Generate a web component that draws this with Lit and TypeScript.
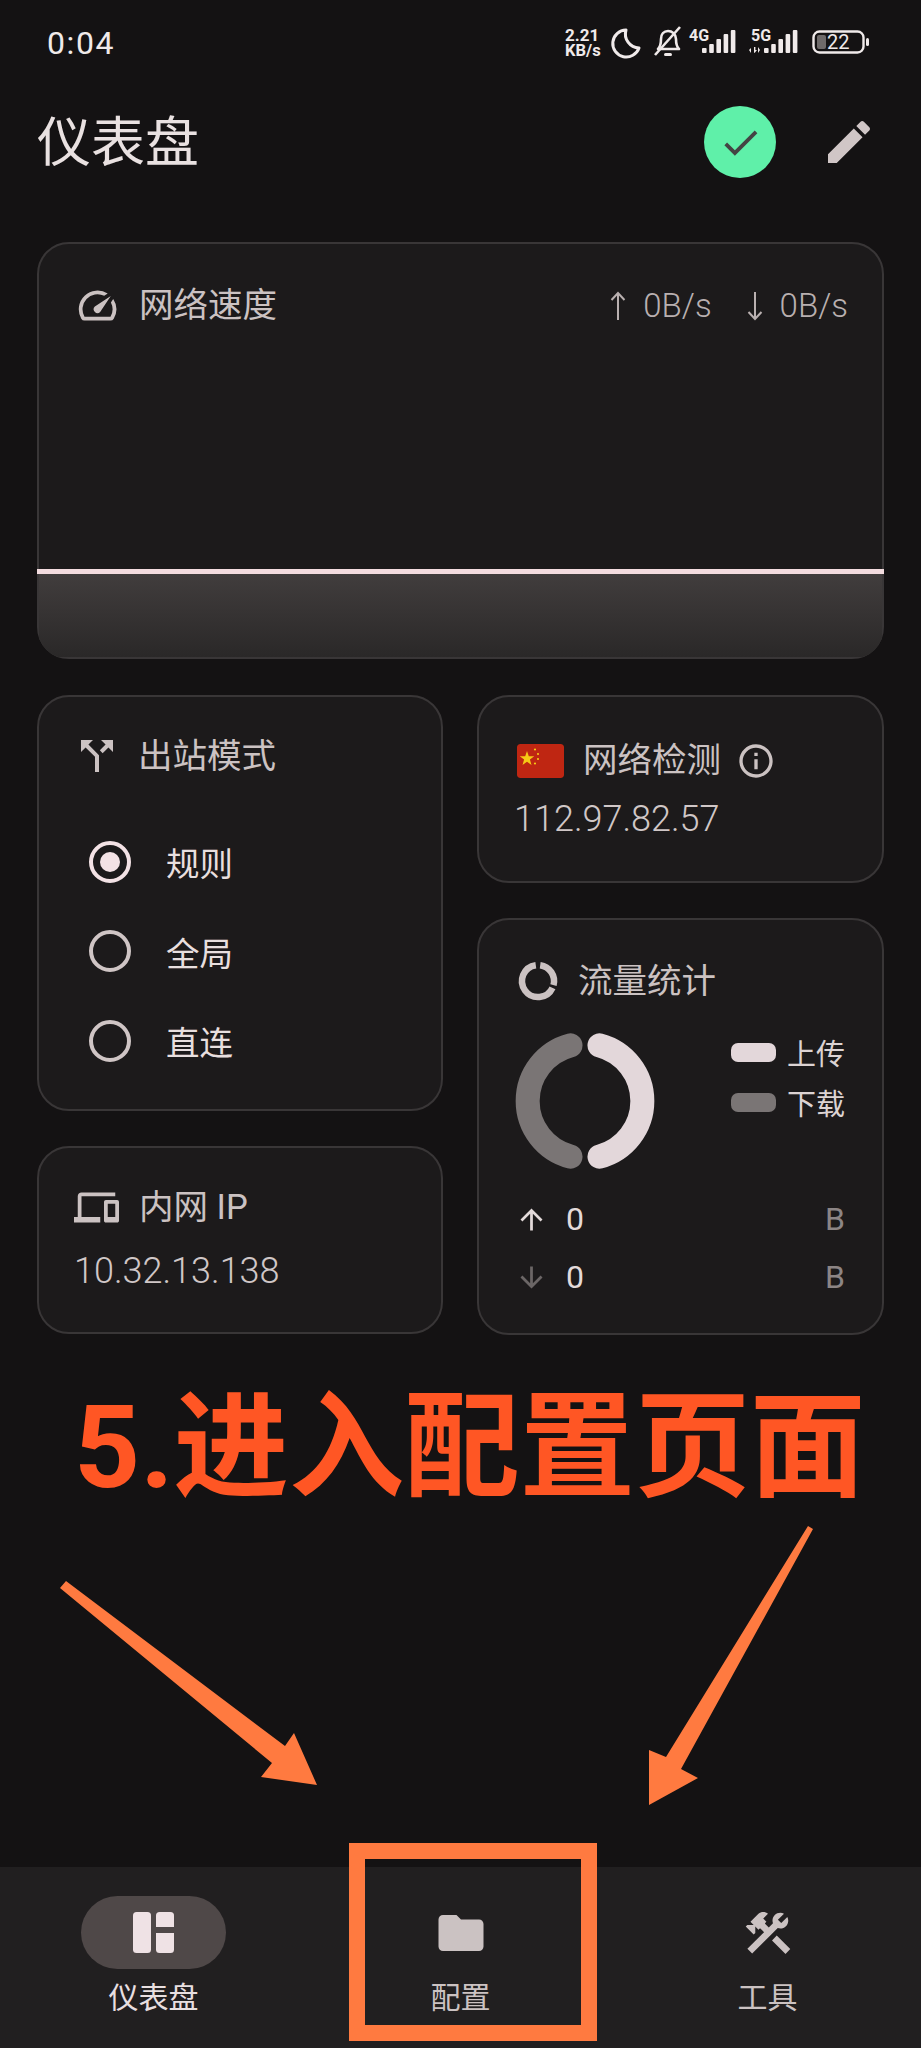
import { LitElement, html, css, svg } from "lit";
import { customElement } from "lit/decorators.js";

const P = {
  speed: "M20.38 8.57l-1.23 1.85a8 8 0 0 1-.22 7.58H5.07A8 8 0 0 1 15.58 6.85l1.85-1.23A10 10 0 0 0 3.35 19a2 2 0 0 0 1.72 1h13.85a2 2 0 0 0 1.74-1 10 10 0 0 0-.27-10.44zm-9.79 6.84a2 2 0 0 0 2.83 0l5.66-8.49-8.49 5.66a2 2 0 0 0 0 2.83z",
  split: "M14 4l2.29 2.29-2.88 2.88 1.42 1.42 2.88-2.88L20 10V4zm-4 0H4v6l2.29-2.29 4.71 4.7V20h2v-8.41l-5.29-5.3z",
  devices: "M4 6h18V4H4c-1.1 0-2 .9-2 2v11H0v3h14v-3H4V6zm19 2h-6c-.55 0-1 .45-1 1v10c0 .55.45 1 1 1h6c.55 0 1-.45 1-1V9c0-.55-.45-1-1-1zm-1 9h-4v-7h4v7z",
  info: "M11 7h2v2h-2zm0 4h2v6h-2zm1-9C6.48 2 2 6.48 2 12s4.48 10 10 10 10-4.48 10-10S17.52 2 12 2zm0 18c-4.41 0-8-3.59-8-8s3.59-8 8-8 8 3.59 8 8-3.59 8-8 8z",
  edit: "M3 17.25V21h3.75L17.81 9.94l-3.75-3.75L3 17.25zM20.71 7.04c.39-.39.39-1.02 0-1.41l-2.34-2.34c-.39-.39-1.02-.39-1.41 0l-1.83 1.83 3.75 3.75 1.83-1.83z",
  check: "M9 16.17L4.83 12l-1.42 1.41L9 19 21 7l-1.41-1.41z",
  up: "M4 12l1.41 1.41L11 7.83V20h2V7.83l5.58 5.59L20 12l-8-8-8 8z",
  down: "M20 12l-1.41-1.41L13 16.17V4h-2v12.17l-5.58-5.59L4 12l8 8 8-8z",
  folder: "M10 4H4c-1.1 0-2 .9-2 2v12c0 1.1.9 2 2 2h16c1.1 0 2-.9 2-2V8c0-1.1-.9-2-2-2h-8l-2-2z",
  tools: "M13.78 15.3l6 6 2.11-2.16-6-6zM17.5 10c1.93 0 3.5-1.57 3.5-3.5 0-.58-.16-1.12-.41-1.6l-2.7 2.7-1.49-1.49 2.7-2.7C18.62 3.16 18.08 3 17.5 3 15.57 3 14 4.57 14 6.5c0 .41.08.8.21 1.16l-1.85 1.85-1.78-1.78.71-.71-1.41-1.41L12 3.49c-1.17-1.17-3.07-1.17-4.24 0L4.22 7.03l1.41 1.41H2.81l-.71.71 3.54 3.54.71-.71V9.15l1.41 1.41.71-.71 1.78 1.78-7.41 7.41 2.12 2.12L16.34 9.79c.36.13.75.21 1.16.21z",
};

const icon = (d: string, size: number) =>
  html`<svg class="ic" width=${size} height=${size} viewBox="0 0 24 24" fill="currentColor"><path d=${d}></path></svg>`;

const bars = (x0: number, hs: number[]) =>
  hs.map((h, i) => svg`<rect x=${x0 + i * 7.2} y=${53 - h} width="4.6" height=${h} rx="1"></rect>`);

@customElement("app-root")
export class AppRoot extends LitElement {
  static styles = css`
    :host {
      display: flex;
      flex-direction: column;
      position: relative;
      width: 921px;
      height: 2048px;
      overflow: hidden;
      background: #141213;
      color: #cbc2c2;
      font-family: Roboto, "Noto Sans CJK SC", sans-serif;
    }
    .ic { display: block; flex: none; }
    .status {
      height: 86px;
      display: flex;
      align-items: center;
      justify-content: space-between;
      padding-left: 47px;
      color: #f0eaea;
      flex: none;
    }
    .clock { font-size: 32px; font-weight: 400; letter-spacing: 1.6px; }
    .sicons { display: block; flex: none; }
    .sicons text { font-family: Roboto, sans-serif; fill: #f0eaea; }
    .header {
      height: 112px;
      flex: none;
      display: flex;
      align-items: center;
      justify-content: space-between;
      padding: 0 44px 0 37px;
    }
    .title { font-size: 54px; line-height: 70px; color: #e9e1e1; font-weight: 400; padding-top: 4px; }
    .actions { display: flex; align-items: center; gap: 45px; color: #d0c6c6; }
    .ok {
      width: 72px;
      height: 72px;
      border-radius: 50%;
      background: #5ff0a9;
      color: #444444;
      display: flex;
      align-items: center;
      justify-content: center;
    }
    main {
      flex: 1;
      padding: 44px 37px 0;
      display: flex;
      flex-direction: column;
    }
    .card {
      box-sizing: border-box;
      background: #1c1a1b;
      border: 2px solid #393637;
      border-radius: 32px;
    }
    .speed {
      height: 417px;
      display: flex;
      flex-direction: column;
      overflow: clip;
      overflow-clip-margin: border-box;
    }
    .speed-head {
      display: flex;
      align-items: center;
      padding: 39px 34px 0 36px;
      gap: 19px;
    }
    .label { font-size: 34.5px; line-height: 45px; white-space: nowrap; }
    .rates {
      margin-left: auto;
      display: flex;
      align-items: center;
      font-size: 33px;
      font-weight: 300;
      color: #b9b0b0;
    }
    .rate { display: flex; align-items: center; gap: 17px; }
    .rate + .rate { margin-left: 35px; }
    .thin-arrow { display: block; }
    .graph { margin-top: auto; }
    .line { height: 5px; margin: 0 -2px; background: #f3dcdf; }
    .fill { height: 83px; background: linear-gradient(#413d3d, #2a2828); }
    .cols {
      margin-top: 36px;
      display: grid;
      grid-template-columns: 406px 407px;
      gap: 34px;
    }
    .col { display: flex; flex-direction: column; gap: 35px; }
    .out { height: 416px; padding: 35px 0 0 34px; }
    .small { height: 188px; }
    .row { display: flex; align-items: center; }
    .out .row { gap: 17px; }
    .radios { margin-top: 37px; padding-left: 16px; }
    .radio { height: 89.5px; display: flex; align-items: center; gap: 35px; font-size: 33.5px; color: #e8dfdf; }
    .dot {
      box-sizing: border-box;
      width: 42px;
      height: 42px;
      border: 4px solid #cfc5c5;
      border-radius: 50%;
      display: flex;
      align-items: center;
      justify-content: center;
    }
    .dot.on { border-color: #f3e2e5; }
    .dot.on::after {
      content: "";
      width: 20px;
      height: 20px;
      border-radius: 50%;
      background: #f3e2e5;
    }
    .ip { padding: 37px 0 0 35px; }
    .ip .row { gap: 20px; }
    .value {
      font-size: 36px;
      line-height: 44px;
      font-weight: 300;
      color: #d0c7c7;
      margin-top: 19px;
    }
    .net { padding: 41px 0 0 38px; }
    .net .row { gap: 19px; }
    .net .value { margin-top: 14px; margin-left: -3px; }
    .flag { width: 47px; height: 34px; border-radius: 3px; display: block; flex: none; }
    .net .info { margin-left: -4px; }
    .traffic { height: 417px; padding: 38px 37px 0 36px; }
    .traffic .row { gap: 17px; }
    .chart { display: flex; justify-content: space-between; align-items: flex-start; margin-top: 27px; }
    .legend { margin-top: -4px; }
    .lg { height: 50px; display: flex; align-items: center; gap: 11px; font-size: 29px; color: #dcd3d3; }
    .pill { width: 45px; height: 19px; border-radius: 7px; }
    .stats { margin-top: 19px; }
    .stat { height: 58px; display: flex; align-items: center; gap: 18px; font-size: 32px; color: #e3dada; }
    .stat .unit { margin-left: auto; color: #8c8585; }
    .stat .ic { color: #e3dada; }
    .stat.dim .ic { color: #6b6666; }
    .headline {
      margin-top: 51px;
      padding-left: 37px;
      font-size: 115.3px;
      line-height: 124px;
      font-weight: 700;
      color: #ff5624;
      white-space: nowrap;
      font-family: Roboto, "Noto Sans CJK SC", sans-serif;
    }
    nav {
      height: 181px;
      flex: none;
      background: #211f20;
      display: grid;
      grid-template-columns: repeat(3, 1fr);
    }
    .tab {
      padding-top: 29px;
      display: flex;
      flex-direction: column;
      align-items: center;
      color: #cbc2c2;
    }
    .slot {
      width: 145px;
      height: 73px;
      border-radius: 37px;
      display: flex;
      align-items: center;
      justify-content: center;
    }
    .tab.active .slot { background: #4f4848; color: #efe2e5; }
    .tab-label { margin-top: 9px; font-size: 30px; line-height: 40px; }
    .tab.active .tab-label { color: #e8dfe0; }
    .marks { position: absolute; left: 0; top: 0; pointer-events: none; }
    .box {
      position: absolute;
      left: 349px;
      top: 1843px;
      width: 248px;
      height: 198px;
      box-sizing: border-box;
      border: 16px solid #ff7a40;
      pointer-events: none;
    }
  `;

  render() {
    return html`
      <div class="status">
        <span class="clock">0:04</span>
        <svg class="sicons" width="356" height="86" viewBox="565 0 356 86" fill="#f0eaea">
          <text x="565" y="41" font-size="17" font-weight="700">2.21</text>
          <text x="565" y="56" font-size="16.5" font-weight="700">KB/s</text>
          <path d="M626 30a13.5 13.5 0 1 0 13 18 14 14 0 0 1-13-18z" fill="none" stroke="#f0eaea" stroke-width="3" stroke-linejoin="round"></path>
          <path d="M658 49c3-3 3-6 3-10 0-5 3-8 7-8s8 3 8 8c0 4 0 7 3 10z" fill="none" stroke="#f0eaea" stroke-width="2.6" stroke-linejoin="round"></path>
          <path d="M655 55L680 27" fill="none" stroke="#f0eaea" stroke-width="2.6"></path>
          <rect x="664" y="53" width="8" height="3" rx="1.5"></rect>
          <text x="689" y="41" font-size="16" font-weight="700">4G</text>
          ${bars(702, [5, 9, 14, 19, 23])}
          <text x="751" y="41" font-size="16" font-weight="700">5G</text>
          ${bars(764, [5, 9, 14, 19, 23])}
          <path d="M751 53v-5l-2 2zM754 53v-6h1.4v3l1.6 0-2 2.6zM758 47v6l2-3z"></path>
          <rect x="813.5" y="31.5" width="50" height="21" rx="6" fill="none" stroke="#f0eaea" stroke-width="2.4"></rect>
          <rect x="817" y="35" width="9" height="14" rx="2" fill="#6e6a6a"></rect>
          <text x="827" y="49" font-size="20" font-weight="400">22</text>
          <rect x="866" y="38" width="3" height="8" rx="1.5"></rect>
        </svg>
      </div>
      <div class="header">
        <div class="title">仪表盘</div>
        <div class="actions">
          <div class="ok">${icon(P.check, 45)}</div>
          ${icon(P.edit, 56)}
        </div>
      </div>
      <main>
        <section class="card speed">
          <div class="speed-head">
            ${icon(P.speed, 45)}
            <span class="label">网络速度</span>
            <div class="rates">
              <span class="rate">
                <svg class="thin-arrow" width="16" height="30" viewBox="0 0 16 30" fill="none" stroke="currentColor" stroke-width="2"><path d="M8 29V2M1.5 9L8 2l6.5 7"></path></svg>
                0B/s
              </span>
              <span class="rate">
                <svg class="thin-arrow" width="16" height="30" viewBox="0 0 16 30" fill="none" stroke="currentColor" stroke-width="2"><path d="M8 1v27M1.5 21L8 28l6.5-7"></path></svg>
                0B/s
              </span>
            </div>
          </div>
          <div class="graph">
            <div class="line"></div>
            <div class="fill"></div>
          </div>
        </section>
        <div class="cols">
          <div class="col">
            <section class="card out">
              <div class="row">${icon(P.split, 48)}<span class="label">出站模式</span></div>
              <div class="radios">
                <div class="radio"><span class="dot on"></span>规则</div>
                <div class="radio"><span class="dot"></span>全局</div>
                <div class="radio"><span class="dot"></span>直连</div>
              </div>
            </section>
            <section class="card small ip">
              <div class="row">${icon(P.devices, 45)}<span class="label">内网 IP</span></div>
              <div class="value">10.32.13.138</div>
            </section>
          </div>
          <div class="col">
            <section class="card small net">
              <div class="row">
                <svg class="flag" viewBox="0 0 47 34">
                  <rect width="47" height="34" rx="3" fill="#bf2612"></rect>
                  <polygon fill="#f6c915" points="10,7 11.8,12.2 17.3,12.3 12.9,15.6 14.5,20.9 10,17.8 5.5,20.9 7.1,15.6 2.7,12.3 8.2,12.2"></polygon>
                  <circle cx="18" cy="5.5" r="1.1" fill="#f6c915"></circle>
                  <circle cx="21" cy="10" r="1.1" fill="#f6c915"></circle>
                  <circle cx="21" cy="15" r="1.1" fill="#f6c915"></circle>
                  <circle cx="18" cy="19.5" r="1.1" fill="#f6c915"></circle>
                </svg>
                <span class="label">网络检测</span>
                <span class="info">${icon(P.info, 40)}</span>
              </div>
              <div class="value">112.97.82.57</div>
            </section>
            <section class="card traffic">
              <div class="row">
                <svg class="ic" width="46" height="46" viewBox="0 0 46 46" fill="none" stroke="currentColor" stroke-width="6.5">
                  <path d="M25.2 7.2A16 16 0 0 1 38.5 27.1"></path>
                  <path d="M37.5 29.8A16 16 0 1 1 20.8 7.2"></path>
                </svg>
                <span class="label">流量统计</span>
              </div>
              <div class="chart">
                <svg width="140" height="140" viewBox="0 0 140 140" fill="none" stroke-width="24" stroke-linecap="round">
                  <path d="M84.5 14.4A57.5 57.5 0 0 1 84.5 125.6" stroke="#e3d7da"></path>
                  <path d="M55.5 14.4A57.5 57.5 0 0 0 55.5 125.6" stroke="#7a7575"></path>
                </svg>
                <div class="legend">
                  <div class="lg"><span class="pill" style="background:#e3d7da"></span>上传</div>
                  <div class="lg"><span class="pill" style="background:#7a7575"></span>下载</div>
                </div>
              </div>
              <div class="stats">
                <div class="stat">${icon(P.up, 33)}<span>0</span><span class="unit">B</span></div>
                <div class="stat dim">${icon(P.down, 33)}<span>0</span><span class="unit">B</span></div>
              </div>
            </section>
          </div>
        </div>
        <div class="headline">5.进入配置页面</div>
      </main>
      <nav>
        <div class="tab active">
          <div class="slot">
            <svg class="ic" width="41" height="41" viewBox="0 0 41 41" fill="currentColor">
              <rect x="0" y="0" width="18" height="41" rx="3.5"></rect>
              <path d="M23 3.5A3.5 3.5 0 0 1 26.5 0H37.5A3.5 3.5 0 0 1 41 3.5V15H23z"></path>
              <path d="M23 21H41V37.5A3.5 3.5 0 0 1 37.5 41H26.5A3.5 3.5 0 0 1 23 37.5z"></path>
            </svg>
          </div>
          <div class="tab-label">仪表盘</div>
        </div>
        <div class="tab">
          <div class="slot">${icon(P.folder, 54)}</div>
          <div class="tab-label">配置</div>
        </div>
        <div class="tab">
          <div class="slot">${icon(P.tools, 54)}</div>
          <div class="tab-label">工具</div>
        </div>
      </nav>
      <div class="box"></div>
      <svg class="marks" width="921" height="2048" viewBox="0 0 921 2048" fill="#ff7a40">
        <polygon points="60,1588 66,1581 285,1746 294,1733 317,1785 261,1777 272,1763"></polygon>
        <polygon points="808,1526 813,1529 681,1769 698,1778 649,1805 649,1750 666,1757"></polygon>
      </svg>
    `;
  }
}
